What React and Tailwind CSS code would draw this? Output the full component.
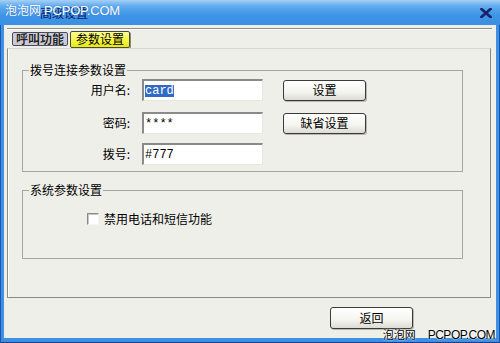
import React from "react";

function Field({ label, children, first, mt }) {
  return (
    <div className={`flex items-center h-[22px] ${mt}`}>
      <div className="w-[107px] text-right leading-[14px]">{label}</div>
      <div className="ml-[12px] w-[121px] h-[22px] bg-white border-t-2 border-l-2 border-t-[#8a8a8a] border-l-[#8a8a8a] border-r border-b border-r-[#e6e6e2] border-b-[#e6e6e2] flex items-center pl-[1px] font-['Liberation_Mono',monospace] text-[12px]">
        {children}
      </div>
      {first}
    </div>
  );
}

function Btn({ children, className }) {
  return (
    <button className={`h-[21px] w-[83px] border border-[#3a3a3a] rounded-[3px] bg-[linear-gradient(to_bottom,#ffffff_0%,#f4f4ef_60%,#dcdcd4_100%)] shadow-[1px_1px_0_#b8b8b0] text-[12px] leading-[14px] text-black flex items-center justify-center ${className}`}>
      {children}
    </button>
  );
}

export default function App() {
  return (
    <div className="relative w-[500px] h-[343px] flex flex-col overflow-hidden bg-[#3d90e4] shadow-[inset_1px_0_0_#1b56b2,inset_-1px_0_0_#1b56b2,inset_0_-1px_0_#173f8e] font-['Noto_Sans_CJK_SC',sans-serif] text-[12px] text-black">
      {/* title bar */}
      <div className="relative h-[25px] flex items-center bg-[linear-gradient(to_bottom,#a6cff6_0%,#5fabee_25%,#3f95e6_60%,#3a8fe2_100%)]">
        <span className="ml-[40px] text-[12px] leading-[14px] text-[#10206a]">高级设置</span>
        <svg className="ml-auto mr-[8px]" width="12" height="10" viewBox="0 0 12 10">
          <path d="M1.5 1 L10.5 9 M10.5 1 L1.5 9" stroke="#1a2368" strokeWidth="2.6" strokeLinecap="square" />
        </svg>
        <div className="absolute left-[5px] top-[2px] flex items-baseline gap-[3px] text-white [text-shadow:0_0_1px_#2a6cc0]">
          <span className="text-[12px] leading-[16px]">泡泡网</span>
          <span className="font-['Liberation_Sans',sans-serif] text-[13px] leading-[16px] tracking-[-0.2px]">PCPOP.COM</span>
        </div>
      </div>

      {/* client */}
      <div className="flex-1 mx-[4px] mb-[5px] bg-[#efefea] flex flex-col">
        <div className="h-[3px]" />
        <div className="ml-[3px] mr-[4px] border-t border-t-[#8f8f88] border-b border-b-white" />
        <div className="h-[18px] flex items-center pl-[8px]">
          <div className="w-[56px] h-[14px] bg-[#cacad8] border border-[#4a4a5a] rounded-[2px] flex items-center justify-center text-[12px] leading-[12px] font-bold text-[#222] [text-shadow:0_0_1px_#fff]">
            呼叫功能
          </div>
          <div className="ml-[2px] w-[60px] h-[17px] bg-[linear-gradient(to_bottom,#ffff90,#eaea10)] border border-[#4a4a3a] rounded-[2px] shadow-[1px_1px_0_#8a8a70] flex items-center justify-center text-[12px] leading-[12px]">
            参数设置
          </div>
        </div>

        {/* page */}
        <div className="ml-[3px] mr-[5px] h-[250px] border border-[#8b8b83] border-t-[#d8d8d2] shadow-[inset_1px_0_0_#fff] flex flex-col">
          <fieldset className="ml-[14px] w-[441px] mt-[14px] border border-[#a6a69e] pt-[2px] pb-[6px]">
            <legend className="ml-[6px] px-[1px] leading-[14px]">拨号连接参数设置</legend>
            <Field label="用户名:" first={<Btn className="ml-[20px]">设置</Btn>}>
              <span className="bg-[#316ac5] text-white leading-[12px]">card</span>
            </Field>
            <Field label="密码:" mt="mt-[11px]" first={<Btn className="ml-[20px]">缺省设置</Btn>}>
              <span>****</span>
            </Field>
            <Field label="拨号:" mt="mt-[9px]">
              <span>#777</span>
            </Field>
          </fieldset>

          <fieldset className="ml-[14px] w-[441px] mt-[11px] border border-[#a6a69e] pt-[15px] pb-[32px]">
            <legend className="ml-[6px] px-[1px] leading-[14px]">系统参数设置</legend>
            <div className="flex items-center h-[14px] pl-[64px]">
              <div className="w-[12px] h-[12px] bg-white border border-t-[#8a8a8a] border-l-[#8a8a8a] border-r-[#f4f4f0] border-b-[#f4f4f0] shadow-[inset_1px_1px_0_#c8c8c4]" />
              <span className="ml-[5px] leading-[14px]">禁用电话和短信功能</span>
            </div>
          </fieldset>
        </div>

        <div className="mt-[9px] flex justify-end pr-[83px]">
          <Btn className="w-[82px] h-[22px]">返回</Btn>
        </div>
      </div>

      <div className="absolute right-[5px] bottom-[1px] flex items-baseline gap-[12px] text-black [text-shadow:0_0_2px_#fff,0_0_1px_#fff]">
        <span className="text-[11px] leading-[14px]">泡泡网</span>
        <span className="font-['Liberation_Sans',sans-serif] text-[12px] leading-[14px] tracking-[-0.5px]">PCPOP.COM</span>
      </div>
    </div>
  );
}
